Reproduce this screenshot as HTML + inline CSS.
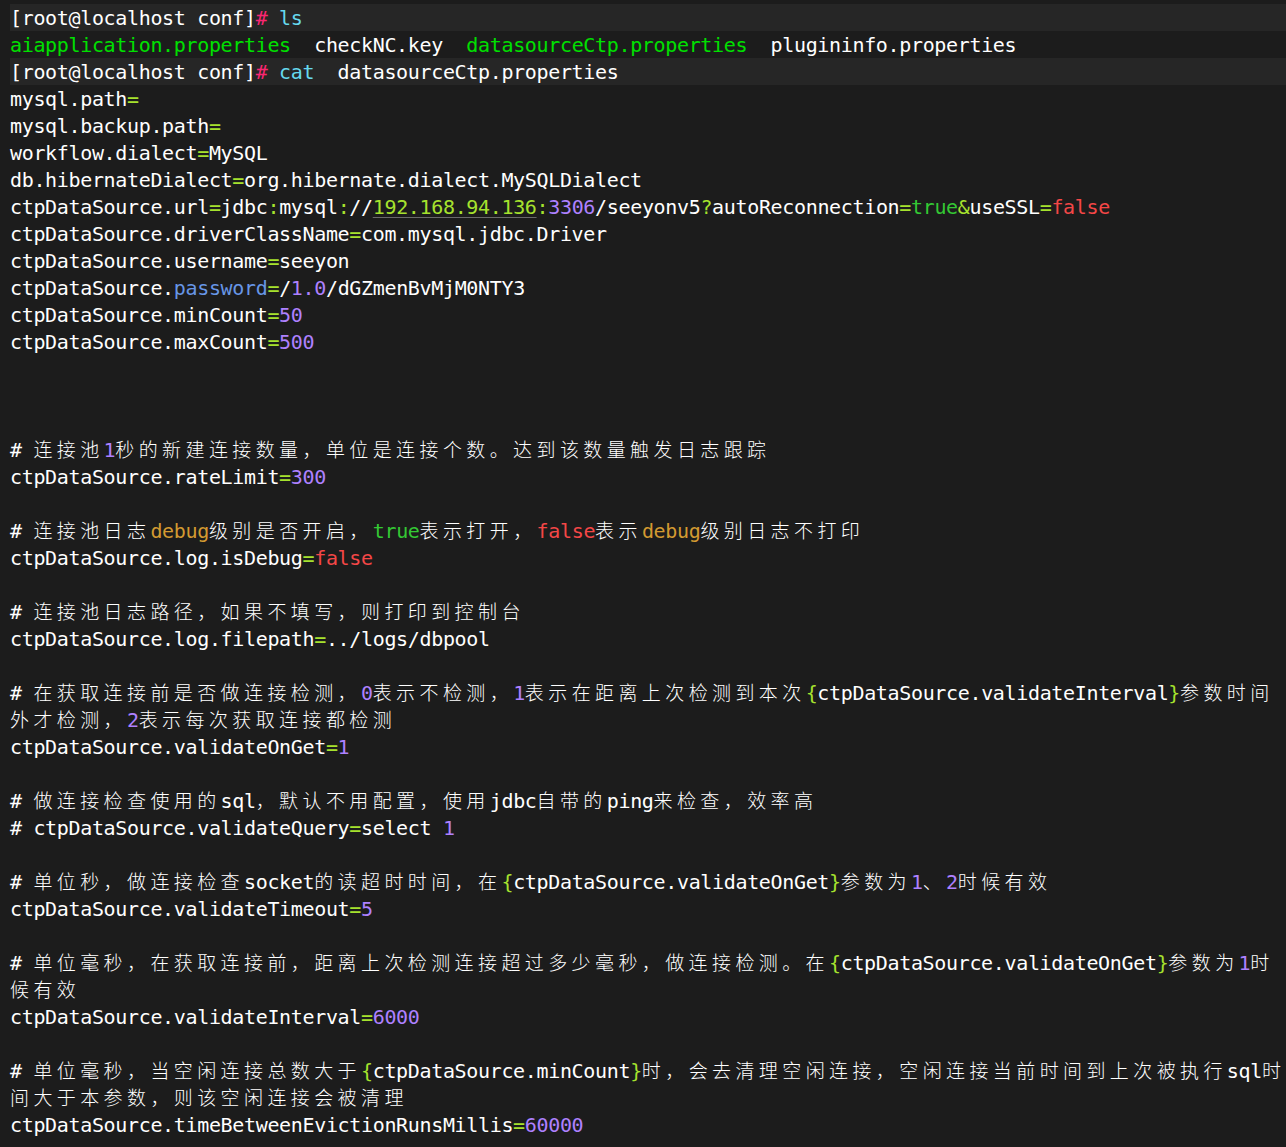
<!DOCTYPE html>
<html lang="zh-CN">
<head>
<meta charset="utf-8">
<title>terminal</title>
<style>
html,body{margin:0;padding:0;background:#1c1c1c;}
body{width:1286px;height:1147px;overflow:hidden;position:relative;}
#term{position:absolute;left:10px;top:4px;width:1276px;font-family:"DejaVu Sans Mono","Liberation Mono","Noto Sans CJK SC",monospace;font-size:20.0px;letter-spacing:-0.3410px;color:#fff;font-kerning:none;font-variant-ligatures:none;-webkit-text-stroke:0.0px;}
.l{height:27px;line-height:29.0px;white-space:pre;overflow:visible;}
.hl{background:#262626;}
i{font-style:normal;font-family:"Liberation Sans","Noto Sans CJK SC",sans-serif;font-size:19px;letter-spacing:4.400px;line-height:0;position:relative;top:0px;font-weight:300;-webkit-text-stroke:0;}
.p{color:#f92672}.c{color:#66d9ef}.g{color:#00e000}.y{color:#a6e22e}.v{color:#ae81ff}
.r{color:#f44747}.t{color:#34c834}.b{color:#6796e6}.o{color:#d39a31}
.u{color:#a6e22e;text-decoration:underline;text-decoration-color:#6a6a6a;text-decoration-thickness:1px;text-underline-offset:3px}
</style>
</head>
<body>
<div id="term">
<div class="l hl">[root@localhost conf]<span class="p">#</span> <span class="c">ls</span></div>
<div class="l"><span class="g">aiapplication.properties</span>  checkNC.key  <span class="g">datasourceCtp.properties</span>  plugininfo.properties</div>
<div class="l hl">[root@localhost conf]<span class="p">#</span> <span class="c">cat</span>  datasourceCtp.properties</div>
<div class="l">mysql.path<span class="y">=</span></div>
<div class="l">mysql.backup.path<span class="y">=</span></div>
<div class="l">workflow.dialect<span class="y">=</span>MySQL</div>
<div class="l">db.hibernateDialect<span class="y">=</span>org.hibernate.dialect.MySQLDialect</div>
<div class="l">ctpDataSource.url<span class="y">=</span>jdbc<span class="y">:</span>mysql<span class="y">:</span>//<span class="u">192.168.94.136</span><span class="y">:</span><span class="v">3306</span>/seeyonv5<span class="y">?</span>autoReconnection<span class="y">=</span><span class="t">true</span><span class="y">&amp;</span>useSSL<span class="y">=</span><span class="r">false</span></div>
<div class="l">ctpDataSource.driverClassName<span class="y">=</span>com.mysql.jdbc.Driver</div>
<div class="l">ctpDataSource.username<span class="y">=</span>seeyon</div>
<div class="l">ctpDataSource.<span class="b">password</span><span class="y">=</span>/<span class="v">1.0</span>/dGZmenBvMjM0NTY3</div>
<div class="l">ctpDataSource.minCount<span class="y">=</span><span class="v">50</span></div>
<div class="l">ctpDataSource.maxCount<span class="y">=</span><span class="v">500</span></div>
<div class="l"></div>
<div class="l"></div>
<div class="l"></div>
<div class="l"># <i>连接池</i><span class="v">1</span><i>秒的新建连接数量，单位是连接个数。达到该数量触发日志跟踪</i></div>
<div class="l">ctpDataSource.rateLimit<span class="y">=</span><span class="v">300</span></div>
<div class="l"></div>
<div class="l"># <i>连接池日志</i><span class="o">debug</span><i>级别是否开启，</i><span class="t">true</span><i>表示打开，</i><span class="r">false</span><i>表示</i><span class="o">debug</span><i>级别日志不打印</i></div>
<div class="l">ctpDataSource.log.isDebug<span class="y">=</span><span class="r">false</span></div>
<div class="l"></div>
<div class="l"># <i>连接池日志路径，如果不填写，则打印到控制台</i></div>
<div class="l">ctpDataSource.log.filepath<span class="y">=</span>../logs/dbpool</div>
<div class="l"></div>
<div class="l"># <i>在获取连接前是否做连接检测，</i><span class="v">0</span><i>表示不检测，</i><span class="v">1</span><i>表示在距离上次检测到本次</i><span class="y">{</span>ctpDataSource.validateInterval<span class="y">}</span><i>参数时间</i></div>
<div class="l"><i>外才检测，</i><span class="v">2</span><i>表示每次获取连接都检测</i></div>
<div class="l">ctpDataSource.validateOnGet<span class="y">=</span><span class="v">1</span></div>
<div class="l"></div>
<div class="l"># <i>做连接检查使用的</i>sql<i>，默认不用配置，使用</i>jdbc<i>自带的</i>ping<i>来检查，效率高</i></div>
<div class="l"># ctpDataSource.validateQuery<span class="y">=</span>select <span class="v">1</span></div>
<div class="l"></div>
<div class="l"># <i>单位秒，做连接检查</i>socket<i>的读超时时间，在</i><span class="y">{</span>ctpDataSource.validateOnGet<span class="y">}</span><i>参数为</i><span class="v">1</span><i>、</i><span class="v">2</span><i>时候有效</i></div>
<div class="l">ctpDataSource.validateTimeout<span class="y">=</span><span class="v">5</span></div>
<div class="l"></div>
<div class="l"># <i>单位毫秒，在获取连接前，距离上次检测连接超过多少毫秒，做连接检测。在</i><span class="y">{</span>ctpDataSource.validateOnGet<span class="y">}</span><i>参数为</i><span class="v">1</span><i>时</i></div>
<div class="l"><i>候有效</i></div>
<div class="l">ctpDataSource.validateInterval<span class="y">=</span><span class="v">6000</span></div>
<div class="l"></div>
<div class="l"># <i>单位毫秒，当空闲连接总数大于</i><span class="y">{</span>ctpDataSource.minCount<span class="y">}</span><i>时，会去清理空闲连接，空闲连接当前时间到上次被执行</i>sql<i>时</i></div>
<div class="l"><i>间大于本参数，则该空闲连接会被清理</i></div>
<div class="l">ctpDataSource.timeBetweenEvictionRunsMillis<span class="y">=</span><span class="v">60000</span></div>
</div>
</body>
</html>
